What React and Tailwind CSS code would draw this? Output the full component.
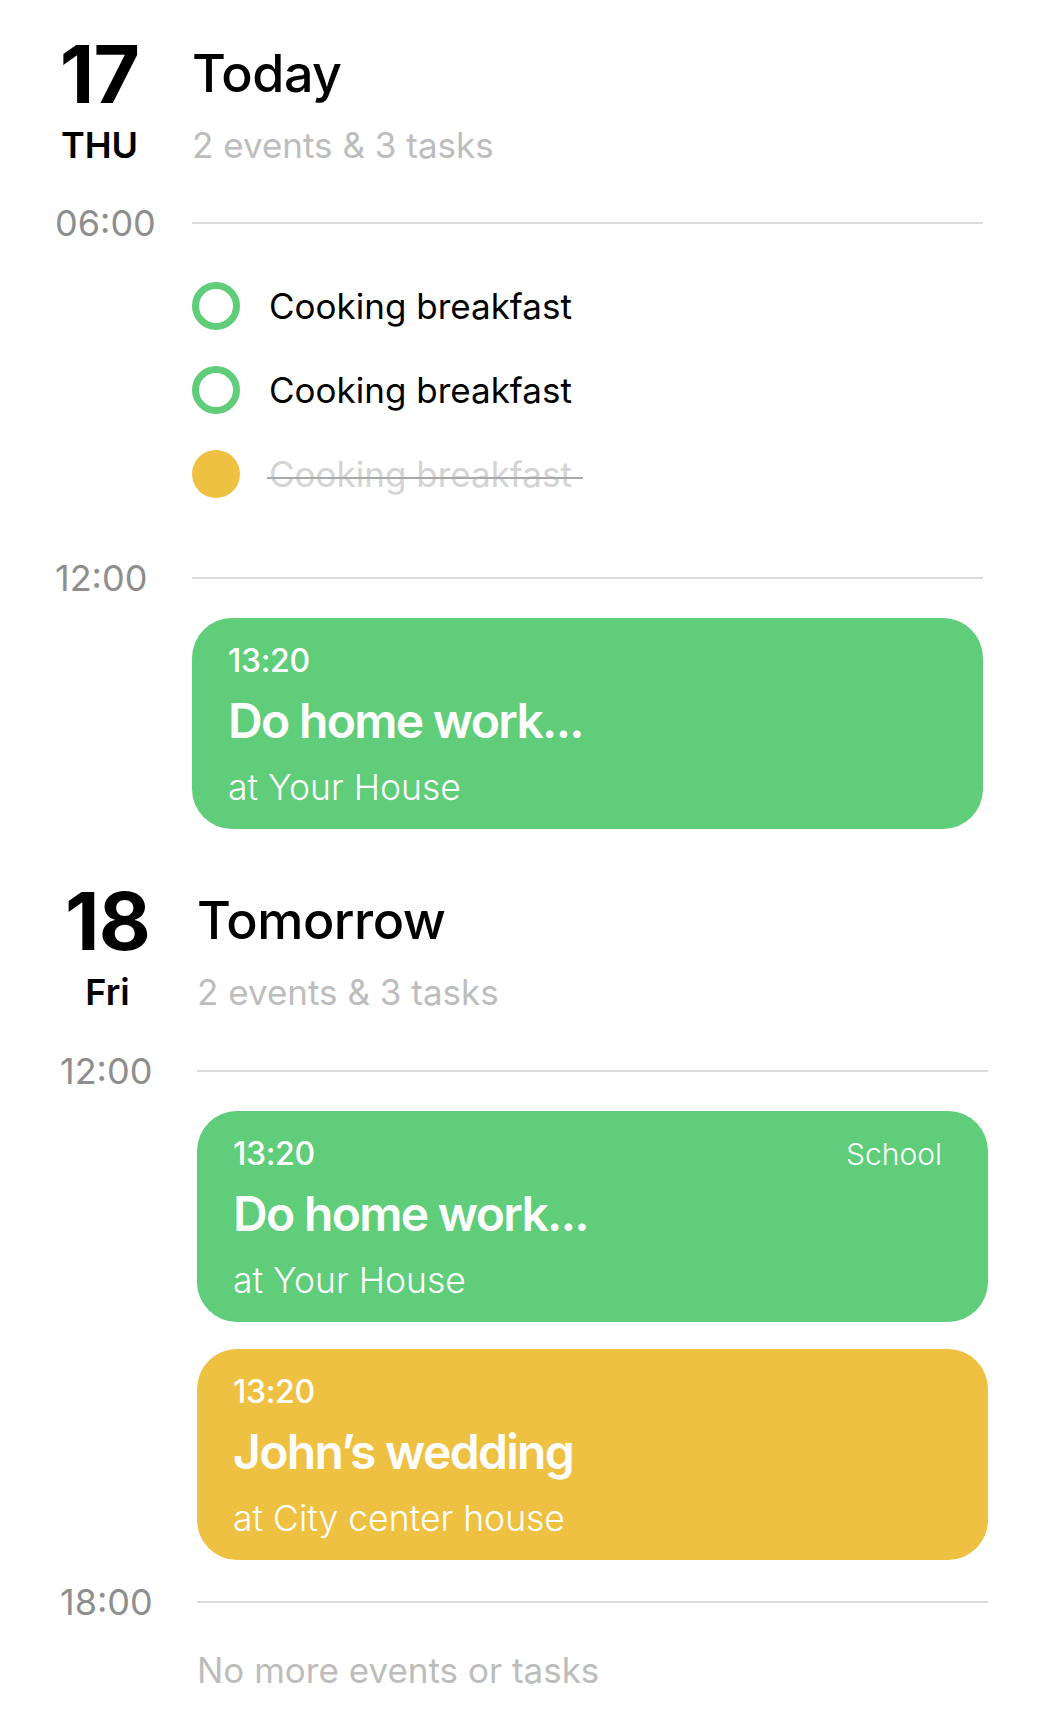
import React from 'react'

const GREEN = 'bg-[#5fcd79]'

function DayHeader({ day, weekday, title, summary, dateBox }) {
  return (
    <div>
      <div className="flex items-start">
        <div className="w-[137px] flex-shrink-0">
          <div className={`${dateBox} text-center text-[80px] leading-none font-bold tracking-[-0.01em] text-black`}>
            {day}
          </div>
        </div>
        <div className="mt-[14px] text-[52px] leading-none font-medium tracking-[-0.01em] text-black">
          {title}
        </div>
      </div>
      <div className="flex items-baseline mt-[13px]">
        <div className="w-[137px] flex-shrink-0">
          <div className={`${dateBox} text-center text-[36px] leading-none font-semibold text-black`}>
            {weekday}
          </div>
        </div>
        <div className="text-[35px] leading-none text-[#bdbdbd]">{summary}</div>
      </div>
    </div>
  )
}

function TimeRow({ time, className = '' }) {
  return (
    <div className={`flex items-center ${className}`}>
      <div className="w-[137px] flex-shrink-0 text-[36px] leading-none text-[#8e8e8e]">
        {time}
      </div>
      <div className="flex-1 h-[2px] bg-[#dcdcdc]" />
    </div>
  )
}

function Task({ label, done }) {
  return (
    <div className="flex items-center h-[48px] gap-[29px]">
      {done ? (
        <div className="w-[48px] h-[48px] rounded-full bg-[#efc143] flex-shrink-0" />
      ) : (
        <div className="w-[48px] h-[48px] rounded-full border-[7px] border-[#5fcd79] flex-shrink-0" />
      )}
      {done ? (
        <span className="relative text-[35px] leading-none text-[#d4d4d4]">
          {label}
          <span className="absolute left-[-2px] right-[-11px] top-[20px] h-[2px] bg-[#a9a9a9]" />
        </span>
      ) : (
        <span className="text-[35px] leading-none text-black">{label}</span>
      )}
    </div>
  )
}

function EventCard({ time, title, place, tag, color }) {
  return (
    <div className={`${color} rounded-[40px] h-[211px] pl-[36px] pr-[46px] pt-[27px] text-white`}>
      <div className="flex items-baseline justify-between">
        <span className="text-[32px] leading-none font-medium tracking-[-0.01em]">{time}</span>
        {tag && <span className="text-[30px] leading-none font-light">{tag}</span>}
      </div>
      <div className="mt-[20px] text-[48px] leading-none font-semibold tracking-[-0.035em]">{title}</div>
      <div className="mt-[25px] text-[35.5px] leading-none font-light">{place}</div>
    </div>
  )
}

export default function App() {
  return (
    <div className="min-h-screen bg-white pt-[34px] pl-[55px] pr-[63px] font-['Inter','Noto_Sans',sans-serif]">
      {/* Today */}
      <section>
        <DayHeader day="17" weekday="THU" title="Today" summary="2 events & 3 tasks" dateBox="w-[89px]" />
        <TimeRow time="06:00" className="mt-[42px]" />
        <div className="ml-[137px] mt-[41px] flex flex-col gap-[36px]">
          <Task label="Cooking breakfast" />
          <Task label="Cooking breakfast" />
          <Task label="Cooking breakfast" done />
        </div>
        <TimeRow time="12:00" className="mt-[62px]" />
        <div className="ml-[137px] mt-[22px]">
          <EventCard time="13:20" title="Do home work..." place="at Your House" color={GREEN} />
        </div>
      </section>

      {/* Tomorrow */}
      <section className="mt-[52px] ml-[5px] mr-[-5px]">
        <DayHeader day="18" weekday="Fri" title="Tomorrow" summary="2 events & 3 tasks" dateBox="w-[95px]" />
        <TimeRow time="12:00" className="mt-[43px]" />
        <div className="ml-[137px] mt-[22px] flex flex-col gap-[27px]">
          <EventCard time="13:20" title="Do home work..." place="at Your House" tag="School" color={GREEN} />
          <EventCard time="13:20" title="John’s wedding" place="at City center house" color="bg-[#efc143]" />
        </div>
        <TimeRow time="18:00" className="mt-[24px]" />
        <div className="ml-[137px] mt-[33px] text-[35px] leading-none text-[#bdbdbd]">
          No more events or tasks
        </div>
      </section>
    </div>
  )
}
